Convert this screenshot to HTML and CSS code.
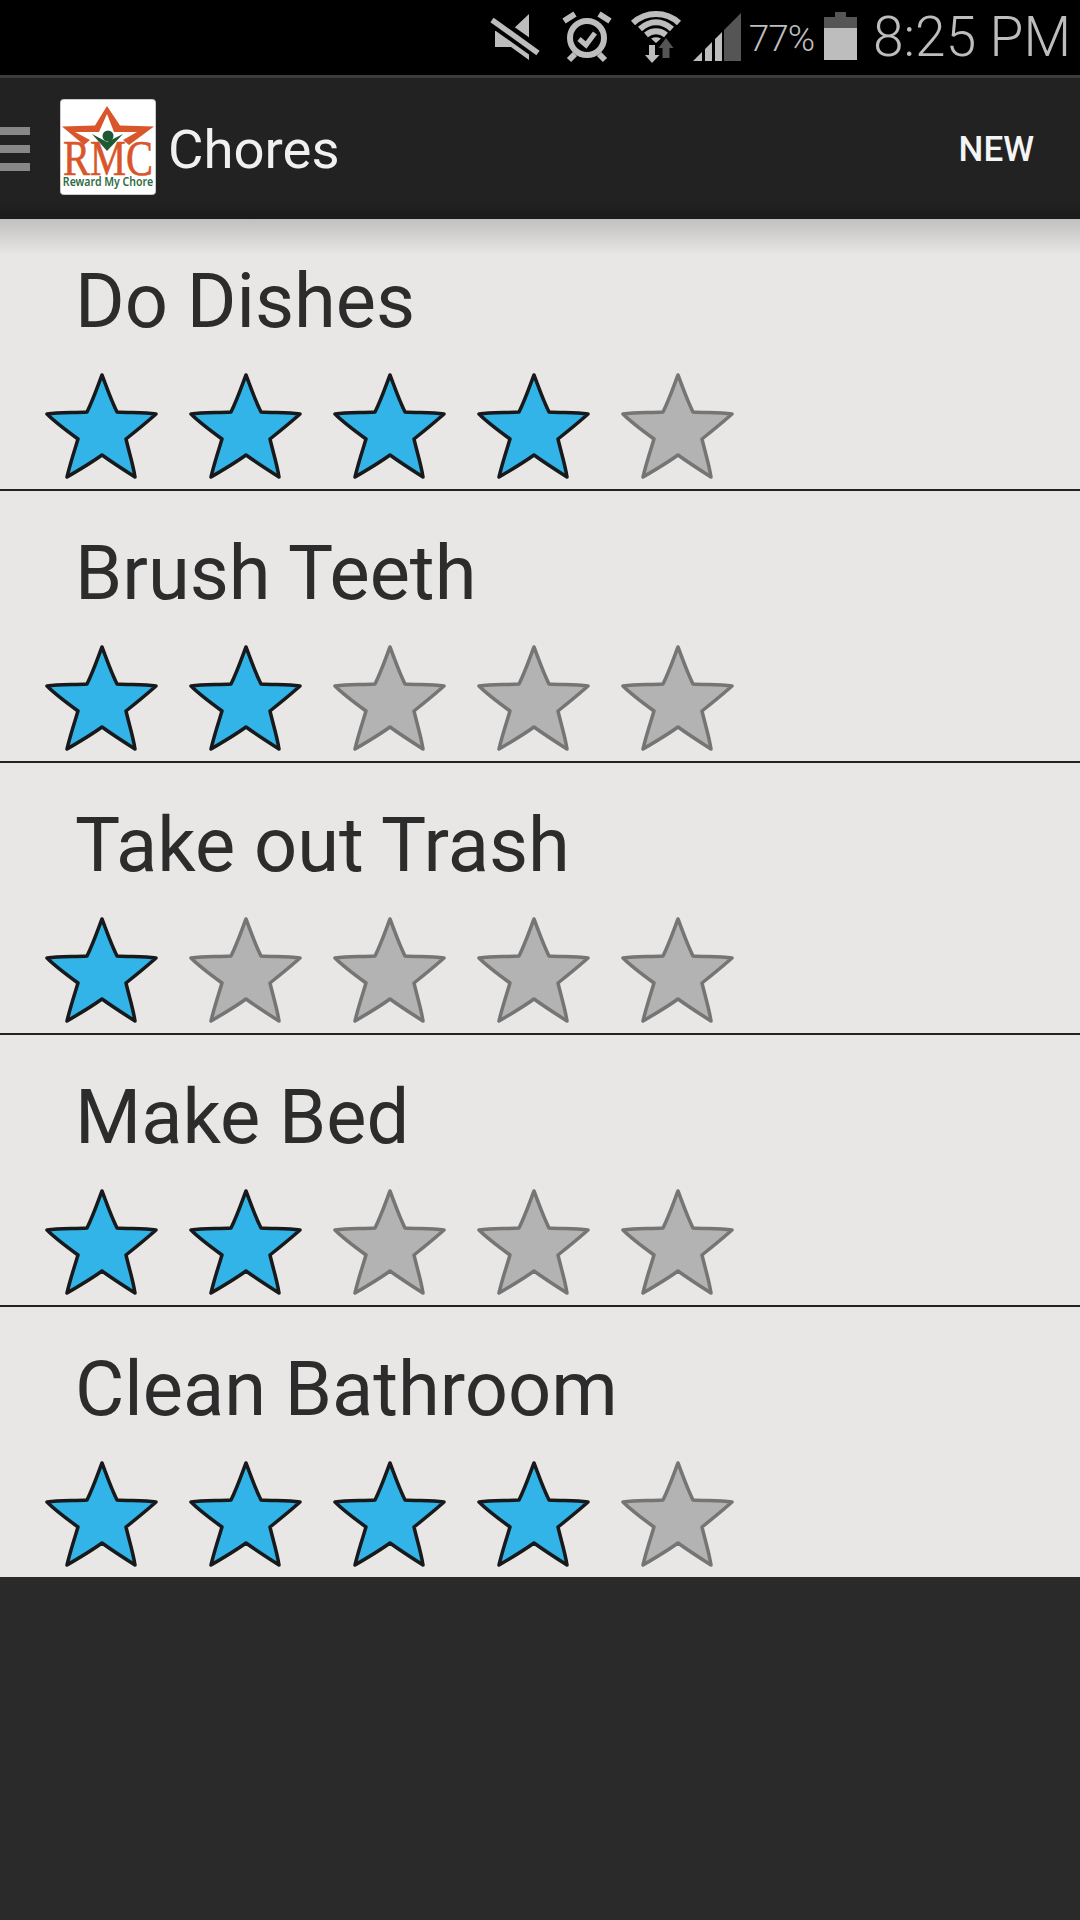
FILE: index.html
```html
<!DOCTYPE html>
<html lang="en">
<head>
<meta charset="utf-8">
<title>Chores</title>
<link rel="stylesheet" href="styles.css">
</head>
<body>
<svg class="defs" width="0" height="0" aria-hidden="true">
  <defs>
    <path id="star" d="M57 2 C62 15 66 27 72 39 C85 40 98 39 111 41 C101 50 91 58 81 66 C84 79 88 91 90 104 C79 97 68 90 57 82 C46 90 34 97 22 104 C25 91 29 79 33 66 C22 58 11 50 2 41 C15 39 29 40 42 39 C48 27 52 15 57 2 Z"/>
  </defs>
</svg>
<header class="status">
  <svg class="ico mute" viewBox="0 0 48 47"><path class="g" d="M38 1 V47 L20 34 H4 V18 H20 Z"/><path class="cut2" d="M0 6 L48 40"/><path class="cut" d="M1 7 L47 40"/></svg>
  <svg class="ico alarm" viewBox="0 0 48 48"><circle class="o" cx="24" cy="25" r="17"/><path class="o" d="M1 8 L12 1 M36 1 L47 8 M12 41 L6 47 M36 41 L42 47"/><path class="o thin" d="M16 26 L23 32 L32 20"/></svg>
  <svg class="ico wifi" viewBox="0 0 50 52"><path class="o" d="M2 12 C15 0 35 0 48 12 M9 18 C19 9 31 9 41 18 M15 24 C21 19 29 19 35 24"/><path class="f" d="M20 27.5 Q25 25 30 27.5 L25 32 Z"/><path class="f" d="M18 34 H24 V44 H28.5 L21 52 L14 44 H18 Z"/><path class="f dim" d="M35 27 L42.500 37 H38.500 V47 H31.500 V37 H27.500 Z"/></svg>
  <svg class="ico signal" viewBox="0 0 48 48"><path class="f" d="M0 48 L9 39 V48 Z M12 36 L19 29 V48 H12 Z M22 26 L29 19 V48 H22 Z"/><path class="f dim" d="M31 17 L48 0 V48 H31 Z"/></svg>
  <span class="pct">77%</span>
  <svg class="ico batt" viewBox="0 0 33 48"><path class="f dim" d="M11 0 H22 V5 H33 V16 H0 V5 H11 Z"/><rect class="f" x="0" y="16" width="33" height="32"/></svg>
  <span class="time">8:25 PM</span>
</header>
<nav class="bar">
  <div class="burger"><i></i><i></i><i></i></div>
  <svg class="logo" viewBox="0 0 96 96">
    <rect class="logo-bg" x="0.5" y="0.5" width="95" height="95" rx="3"/>
    <path class="logo-star" d="M47 7 L60 26.500 L94 27.500 L69 46 L63 41 L77 33 L54 33 L47 15 L39 33 L15 33 L30 41 L24 46 L2 27.500 L35 26.500 Z"/>
    <path class="logo-v" d="M32 35 L47 43 L63 35 L47 52 Z"/>
    <circle class="logo-dot" cx="48" cy="37" r="5.500"/>
    <text class="logo-rmc" transform="translate(48 76) scale(.81 1)" text-anchor="middle">RMC</text>
    <text class="logo-sub" transform="translate(48 87) scale(.88 1)" text-anchor="middle">Reward My Chore</text>
  </svg>
  <h1 class="title">Chores</h1>
  <span class="new">NEW</span>
</nav>
<main class="list">
  <section class="row">
    <h2 class="name">Do Dishes</h2>
    <div class="stars">
      <svg class="star on" viewBox="0 0 114 106"><use href="#star"/></svg>
      <svg class="star on" viewBox="0 0 114 106"><use href="#star"/></svg>
      <svg class="star on" viewBox="0 0 114 106"><use href="#star"/></svg>
      <svg class="star on" viewBox="0 0 114 106"><use href="#star"/></svg>
      <svg class="star" viewBox="0 0 114 106"><use href="#star"/></svg>
    </div>
  </section>
  <section class="row">
    <h2 class="name">Brush Teeth</h2>
    <div class="stars">
      <svg class="star on" viewBox="0 0 114 106"><use href="#star"/></svg>
      <svg class="star on" viewBox="0 0 114 106"><use href="#star"/></svg>
      <svg class="star" viewBox="0 0 114 106"><use href="#star"/></svg>
      <svg class="star" viewBox="0 0 114 106"><use href="#star"/></svg>
      <svg class="star" viewBox="0 0 114 106"><use href="#star"/></svg>
    </div>
  </section>
  <section class="row">
    <h2 class="name">Take out Trash</h2>
    <div class="stars">
      <svg class="star on" viewBox="0 0 114 106"><use href="#star"/></svg>
      <svg class="star" viewBox="0 0 114 106"><use href="#star"/></svg>
      <svg class="star" viewBox="0 0 114 106"><use href="#star"/></svg>
      <svg class="star" viewBox="0 0 114 106"><use href="#star"/></svg>
      <svg class="star" viewBox="0 0 114 106"><use href="#star"/></svg>
    </div>
  </section>
  <section class="row">
    <h2 class="name">Make Bed</h2>
    <div class="stars">
      <svg class="star on" viewBox="0 0 114 106"><use href="#star"/></svg>
      <svg class="star on" viewBox="0 0 114 106"><use href="#star"/></svg>
      <svg class="star" viewBox="0 0 114 106"><use href="#star"/></svg>
      <svg class="star" viewBox="0 0 114 106"><use href="#star"/></svg>
      <svg class="star" viewBox="0 0 114 106"><use href="#star"/></svg>
    </div>
  </section>
  <section class="row">
    <h2 class="name">Clean Bathroom</h2>
    <div class="stars">
      <svg class="star on" viewBox="0 0 114 106"><use href="#star"/></svg>
      <svg class="star on" viewBox="0 0 114 106"><use href="#star"/></svg>
      <svg class="star on" viewBox="0 0 114 106"><use href="#star"/></svg>
      <svg class="star on" viewBox="0 0 114 106"><use href="#star"/></svg>
      <svg class="star" viewBox="0 0 114 106"><use href="#star"/></svg>
    </div>
  </section>
</main>
</body>
</html>
```
FILE: styles.css
```css
* { box-sizing: border-box; }
html, body { margin: 0; padding: 0; }
body {
  width: 1080px;
  height: 1920px;
  background: #2a2a2a;
  font-family: Roboto, "Liberation Sans", sans-serif;
  overflow: hidden;
}
.defs { display: block; height: 0; }

.status {
  height: 78px;
  background: #000;
  border-bottom: 3px solid #3c3c3c;
  display: flex;
  align-items: flex-start;
  justify-content: flex-end;
  padding-right: 9px;
  color: #bdbdbd;
}
.ico { display: block; flex: none; overflow: visible; }
.f, .g { fill: #bdbdbd; }
.dim { fill: #555; }
.o { fill: none; stroke: #bdbdbd; stroke-width: 6; }
.thin { stroke-width: 5; }
.cut { fill: none; stroke: #bdbdbd; stroke-width: 5.5; }
.cut2 { fill: none; stroke: #000; stroke-width: 14; }
.mute { width: 48px; height: 47px; margin-top: 13px; }
.alarm { width: 48px; height: 48px; margin: 13px 0 0 24px; }
.wifi { width: 50px; height: 52px; margin: 11px 0 0 20px; }
.signal { width: 48px; height: 48px; margin: 13px 0 0 12px; }
.pct { font-size: 37px; font-weight: 300; line-height: 40px; margin: 19px 0 0 8px; letter-spacing: -1px; }
.batt { width: 33px; height: 48px; margin: 12px 0 0 10px; }
.time { font-size: 55px; font-weight: 300; line-height: 60px; margin: 7px 0 0 16px; }

.bar {
  height: 141px;
  background: linear-gradient(#222 0, #222 88%, #1a1a1a 100%);
  display: flex;
  align-items: center;
  position: relative;
  z-index: 1;
}
.bar::after {
  content: "";
  position: absolute;
  left: 0;
  right: 0;
  top: 100%;
  height: 36px;
  background: linear-gradient(rgba(0, 0, 0, .17), rgba(0, 0, 0, 0));
}
.burger { width: 30px; display: flex; flex-direction: column; gap: 10px; }
.burger i { display: block; height: 8px; background: #888; }
.logo { width: 96px; height: 96px; margin: 0 0 4px 30px; flex: none; }
.logo-bg { fill: #fff; stroke: #ccc; }
.logo-star { fill: #d9562a; }
.logo-dot { fill: #1d5a34; }
.logo-v { fill: #1d5a34; }
.logo-rmc { font-family: "Liberation Serif", serif; font-size: 50px; fill: #d9562a; stroke: #d9562a; stroke-width: .6; }
.logo-sub { font-family: "Noto Sans", sans-serif; font-size: 12px; font-weight: 600; fill: #2f6b45; }
.title { margin: 0 0 0 12px; font-size: 54.5px; font-weight: 400; color: #f0f0f0; flex: 1; }
.new { font-size: 35px; font-weight: 500; color: #f5f5f5; margin: 2px 46px 0 0; }

.list { background: #e8e7e6; }
.row { height: 272px; border-bottom: 2px solid #222; }
.row:last-child { height: 270px; border-bottom: 0; }
.name {
  margin: 0;
  height: 154px;
  padding: 41px 0 0 75px;
  font-size: 75.8px;
  line-height: 84px;
  font-weight: 400;
  color: #2c2c2c;
}
.stars { display: flex; gap: 30px; padding-left: 45px; }
.star { width: 114px; height: 106px; display: block; flex: none; }
.star use { fill: #b3b3b3; stroke: #757575; stroke-width: 3.5; stroke-linejoin: round; }
.star.on use { fill: #32b4e8; stroke: #17191b; }
```
